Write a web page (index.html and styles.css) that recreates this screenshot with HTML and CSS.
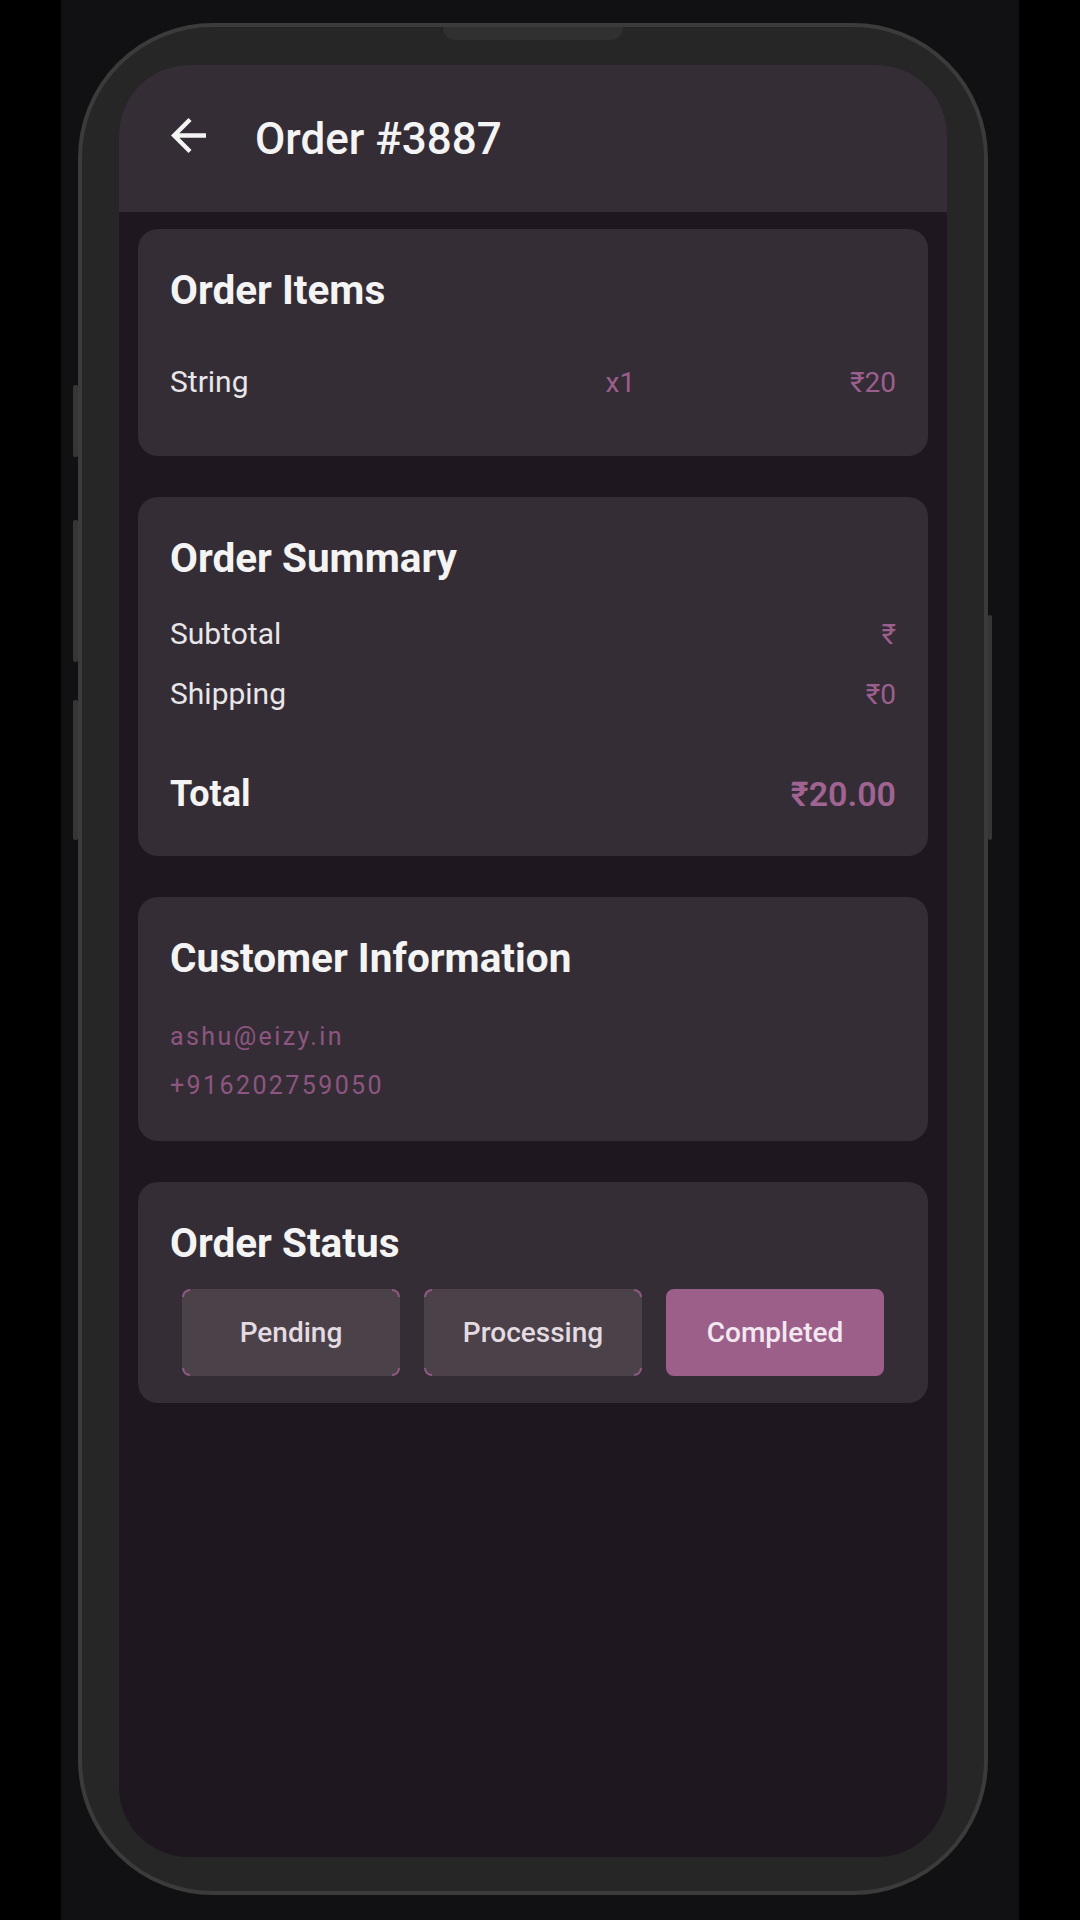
FILE: index.html
```html
<!DOCTYPE html>
<html lang="en">
<head>
<meta charset="utf-8">
<title>Order #3887</title>
<link rel="stylesheet" href="styles.css">
</head>
<body>
<div class="stage">
  <div class="phone">
    <span class="notch"></span>
    <span class="side-btn left b1"></span>
    <span class="side-btn left b2"></span>
    <span class="side-btn left b3"></span>
    <span class="side-btn right b4"></span>
    <div class="screen">
      <header class="appbar">
        <svg class="back" viewBox="4 4 16 16" aria-hidden="true"><path d="M20 11H7.83l5.590-5.59L12 4l-8 8 8 8 1.41-1.41L7.83 13H20v-2z" fill="#f4f4f4"/></svg>
        <h1 class="appbar-title">Order #3887</h1>
      </header>
      <main class="content">
        <section class="card card-items">
          <h2 class="card-title">Order Items</h2>
          <div class="item-row">
            <span class="item-name">String</span>
            <span class="item-qty accent">x1</span>
            <span class="item-price accent">₹20</span>
          </div>
        </section>

        <section class="card card-summary">
          <h2 class="card-title">Order Summary</h2>
          <div class="sum-row first"><span class="sum-label">Subtotal</span><span class="sum-value accent">₹</span></div>
          <div class="sum-row"><span class="sum-label">Shipping</span><span class="sum-value accent">₹0</span></div>
          <div class="sum-row total"><span class="total-label">Total</span><span class="total-value">₹20.00</span></div>
        </section>

        <section class="card card-customer">
          <h2 class="card-title">Customer Information</h2>
          <p class="contact first">ashu@eizy.in</p>
          <p class="contact">+916202759050</p>
        </section>

        <section class="card card-status">
          <h2 class="card-title">Order Status</h2>
          <div class="status-row">
            <button class="status-btn">Pending</button>
            <button class="status-btn">Processing</button>
            <button class="status-btn active">Completed</button>
          </div>
        </section>
      </main>
    </div>
  </div>
</div>
</body>
</html>
```
FILE: styles.css
```css
html, body {
  margin: 0;
  padding: 0;
  background: #000;
  height: 1920px;
  overflow: hidden;
  font-family: Roboto, "Noto Sans", "DejaVu Sans", sans-serif;
}

.stage {
  width: 958px;
  height: 1920px;
  margin-left: 61px;
  background: #111113;
  box-sizing: border-box;
  padding: 23px 0 0 17px;
}

.phone {
  position: relative;
  width: 910px;
  height: 1872px;
  box-sizing: border-box;
  border: 4px solid #3b3b3b;
  border-radius: 135px;
  background: #262626;
  padding: 38px 37px 34px 37px;
}

.notch {
  position: absolute;
  top: 0;
  left: 361px;
  width: 180px;
  height: 13px;
  background: #303030;
  border-radius: 0 0 12px 12px;
}

.side-btn {
  position: absolute;
  width: 5px;
  background: #363636;
  border-radius: 2px;
}
.side-btn.left { left: -9px; }
.side-btn.right { right: -8px; width: 4px; }
.b1 { top: 358px; height: 72px; }
.b2 { top: 493px; height: 142px; }
.b3 { top: 673px; height: 140px; }
.b4 { top: 588px; height: 225px; }

.screen {
  width: 828px;
  height: 1792px;
  border-radius: 70px;
  overflow: hidden;
  background: #1e171f;
  display: flex;
  flex-direction: column;
}

.appbar {
  height: 147px;
  flex: none;
  background: #352d35;
  display: flex;
  align-items: center;
  padding-left: 51px;
  box-sizing: border-box;
}

.back {
  width: 37px;
  height: 35px;
  margin-bottom: 6px;
  flex: none;
}

.appbar-title {
  margin: 0 0 0 48px;
  font-size: 44px;
  line-height: 52px;
  font-weight: 500;
  color: #f4f4f4;
}

.content {
  padding: 17px 19px 0;
  display: flex;
  flex-direction: column;
  gap: 41px;
}

.card {
  background: #352d35;
  border-radius: 20px;
  padding: 38px 32px 0;
}

.card-title {
  margin: 0;
  font-size: 40.5px;
  line-height: 46px;
  font-weight: 700;
  color: #f4f4f4;
}

.accent { color: #9b5f8c; }

/* Order items */
.card-items { padding-bottom: 55px; }
.item-row {
  margin-top: 51px;
  display: grid;
  grid-template-columns: 3fr 1fr 1fr;
  align-items: baseline;
  line-height: 36px;
}
.item-name { font-size: 30px; color: #e8e6e8; }
.item-qty { font-size: 28px; }
.item-price { font-size: 28px; text-align: right; }

/* Summary */
.card-summary { padding-bottom: 42px; }
.sum-row {
  display: flex;
  justify-content: space-between;
  align-items: baseline;
  line-height: 36px;
  margin-top: 23px;
}
.sum-row.first { margin-top: 35px; }
.sum-label { font-size: 30px; color: #e8e6e8; }
.sum-value { font-size: 28px; }
.sum-row.total { margin-top: 61px; line-height: 40px; }
.total-label { font-size: 36px; font-weight: 700; color: #f4f4f4; }
.total-value { font-size: 34px; font-weight: 600; color: #a06492; }

/* Customer */
.card-customer { padding-bottom: 37px; }
.contact {
  margin: 13px 0 0;
  font-size: 25px;
  line-height: 36px;
  letter-spacing: 2.4px;
  color: #8c5680;
}
.contact.first { margin-top: 38px; }

/* Status */
.card-status { padding-bottom: 27px; }
.status-row {
  margin-top: 23px;
  display: grid;
  grid-template-columns: repeat(3, 1fr);
}
.status-btn {
  margin: 0 12px;
  height: 87px;
  border-radius: 8px;
  font-family: inherit;
  font-size: 28px;
  font-weight: 500;
  color: #e4dbe2;
  border: 2px solid transparent;
  background:
    linear-gradient(#4a4149, #4a4149) padding-box,
    linear-gradient(#4a4149, #4a4149) center / 100% calc(100% - 16px) no-repeat border-box,
    linear-gradient(#4a4149, #4a4149) center / calc(100% - 16px) 100% no-repeat border-box,
    linear-gradient(#8f5882, #8f5882) border-box;
  padding: 0;
}
.status-btn.active {
  background: #9c5f8a;
  border-color: #9c5f8a;
  color: #f3e8f0;
}
```
